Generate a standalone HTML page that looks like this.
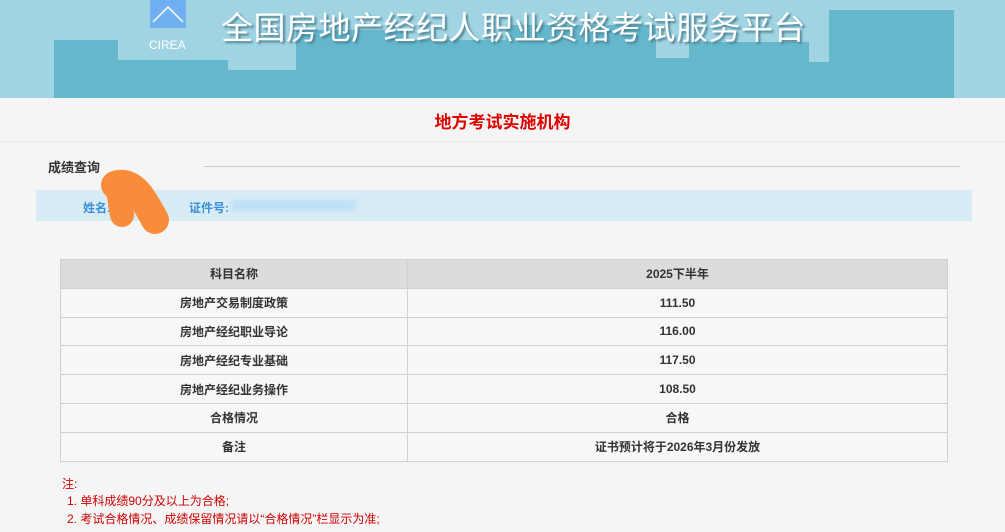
<!DOCTYPE html>
<html><head><meta charset="utf-8"><style>
*{margin:0;padding:0;box-sizing:border-box}
body{width:1005px;height:532px;overflow:hidden;background:#f5f5f5;font-family:"Liberation Sans","Noto Sans CJK SC",sans-serif;position:relative}
.banner{position:absolute;left:0;top:0;width:1005px;height:98px;background:#a0d4e2;overflow:hidden}
.b{position:absolute;background:#65b7cc}
.title{position:absolute;left:221px;top:3px;font-size:32px;color:#fff;letter-spacing:0.5px;text-shadow:2px 2px 2px #4a7f90;white-space:nowrap}
.logo{position:absolute;left:150px;top:0;width:36px;height:28px;background:#6fb0f0}
.cirea{position:absolute;left:149px;top:38px;font-size:12px;color:#fff}
.red{position:absolute;left:0;width:1005px;top:108px;text-align:center;color:#e00000;font-weight:bold;font-size:17px}
.sec{position:absolute;left:48px;top:157px;font-weight:bold;font-size:13px;color:#333}
.line{position:absolute;left:204px;top:166px;width:756px;height:1px;background:#c8c8c8}
.bar{position:absolute;left:36px;top:190px;width:936px;height:31px;background:#d8ecf6}
.lbl{position:absolute;top:199px;font-size:12px;font-weight:bold;color:#3a8fd8}
table{position:absolute;left:60px;top:259px;width:888px;border-collapse:collapse}
td{border:1px solid #d0d0d0;height:28.8px;text-align:center;font-size:12px;font-weight:bold;color:#333;background:#f7f7f7}
tr:first-child td{background:#dcdcdc}
.note{position:absolute;left:62px;color:#d00000;font-size:12px}
</style></head><body>
<div class="banner">
<div class="b" style="left:54px;top:40px;width:64px;height:58px"></div>
<div class="b" style="left:118px;top:60px;width:110px;height:38px"></div>
<div class="b" style="left:228px;top:70px;width:70px;height:28px"></div>
<div class="b" style="left:296px;top:30px;width:110px;height:68px"></div>
<div class="b" style="left:406px;top:40px;width:100px;height:58px"></div>
<div class="b" style="left:506px;top:25px;width:150px;height:73px"></div>
<div class="b" style="left:605px;top:75px;width:50px;height:23px"></div>
<div class="b" style="left:653px;top:58px;width:36px;height:40px"></div>
<div class="b" style="left:689px;top:42px;width:120px;height:56px"></div>
<div class="b" style="left:809px;top:62px;width:20px;height:36px"></div>
<div class="b" style="left:829px;top:10px;width:125px;height:88px"></div>
<div class="logo"><svg width="36" height="28"><path d="M3 22 L18 7 L33 22" stroke="#fff" stroke-width="1.5" fill="none"/></svg></div>
<div class="cirea">CIREA</div>
<div class="title">全国房地产经纪人职业资格考试服务平台</div>
</div>
<div style="position:absolute;left:0;top:141px;width:1005px;height:1px;background:#e8e8e8"></div>
<div class="red">地方考试实施机构</div>
<div class="sec">成绩查询</div>
<div class="line"></div>
<div class="bar"></div>
<div class="lbl" style="left:83px">姓名:</div>
<div class="lbl" style="left:189px">证件号:</div>
<div style="position:absolute;left:232px;top:200px;width:124px;height:11px;background:#bfe0f6;filter:blur(2px)"></div>
<svg style="position:absolute;left:0;top:0" width="1005" height="532"><path d="M115 185 Q128 180 140 195 Q150 210 155 220" stroke="#f98c3a" stroke-width="28" stroke-linecap="round" fill="none"/><path d="M118 190 L122 215" stroke="#f98c3a" stroke-width="24" stroke-linecap="round"/></svg>
<table>
<tr><td style="width:347px">科目名称</td><td>2025下半年</td></tr>
<tr><td>房地产交易制度政策</td><td>111.50</td></tr>
<tr><td>房地产经纪职业导论</td><td>116.00</td></tr>
<tr><td>房地产经纪专业基础</td><td>117.50</td></tr>
<tr><td>房地产经纪业务操作</td><td>108.50</td></tr>
<tr><td>合格情况</td><td>合格</td></tr>
<tr><td>备注</td><td>证书预计将于2026年3月份发放</td></tr>
</table>
<div class="note" style="top:475px">注:</div>
<div class="note" style="top:492px;left:67px">1. 单科成绩90分及以上为合格;</div>
<div class="note" style="top:510px;left:67px">2. 考试合格情况、成绩保留情况请以“合格情况”栏显示为准;</div>
</body></html>
